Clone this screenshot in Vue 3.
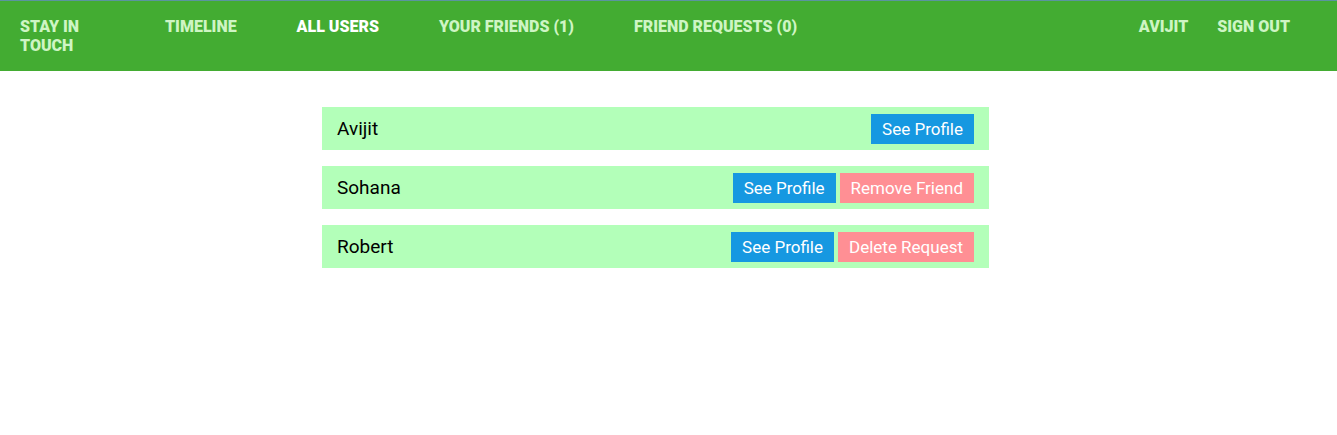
<script setup>
const links = [
  { label: 'Timeline' },
  { label: 'All users', active: true },
  { label: 'Your Friends (1)' },
  { label: 'Friend Requests (0)' },
]
const users = [
  { name: 'Avijit' },
  { name: 'Sohana', action: 'Remove Friend' },
  { name: 'Robert', action: 'Delete Request' },
]
</script>

<template>
  <div class="page">
    <nav class="nav">
      <a class="brand" href="#">Stay in touch</a>
      <div class="menu">
        <a v-for="l in links" :key="l.label" href="#" :class="{ active: l.active }">{{ l.label }}</a>
      </div>
      <div class="account">
        <a href="#">Avijit</a>
        <a href="#">Sign out</a>
      </div>
    </nav>
    <main class="content">
      <ul class="users">
        <li v-for="u in users" :key="u.name">
          <span class="name">{{ u.name }}</span>
          <span class="actions">
            <a class="btn profile" href="#">See Profile</a>
            <button v-if="u.action" type="button" class="btn danger">{{ u.action }}</button>
          </span>
        </li>
      </ul>
    </main>
  </div>
</template>

<style>
body {
  background: #fff;
}
</style>

<style scoped>
.page {
  font-family: Roboto, sans-serif;
  font-size: 16px;
  color: #000;
}
.nav {
  display: flex;
  align-items: flex-start;
  padding: 16px 47px 16px 20px;
  border-top: 1px solid #5b94a0;
  background: #43ac32;
  line-height: 19px;
  font-weight: 900;
  text-transform: uppercase;
}
.nav a {
  color: #cef5c4;
  text-decoration: none;
}
.nav a.active {
  color: #fff;
}
.brand {
  width: 85px;
  margin-right: 60px;
}
.menu {
  display: flex;
  flex: 1;
  gap: 60px;
}
.account {
  display: flex;
  gap: 29px;
}
.content {
  padding-right: 26px;
}
.users {
  max-width: 667px;
  margin: 36px auto 0;
  padding: 0;
  list-style: none;
  display: grid;
  gap: 16px;
}
.users li {
  display: flex;
  align-items: center;
  justify-content: space-between;
  padding: 7px 15px 6px;
  background: #b3ffb9;
}
.name {
  font-size: 19px;
  line-height: 30px;
}
.actions {
  display: flex;
  gap: 4px;
}
.btn {
  padding: 5px 11px;
  border: 0;
  font: 17px/20px Roboto, sans-serif;
  color: #fff;
  text-decoration: none;
}
.profile {
  background: #1698e1;
}
.danger {
  background: #ff8f94;
}
</style>
